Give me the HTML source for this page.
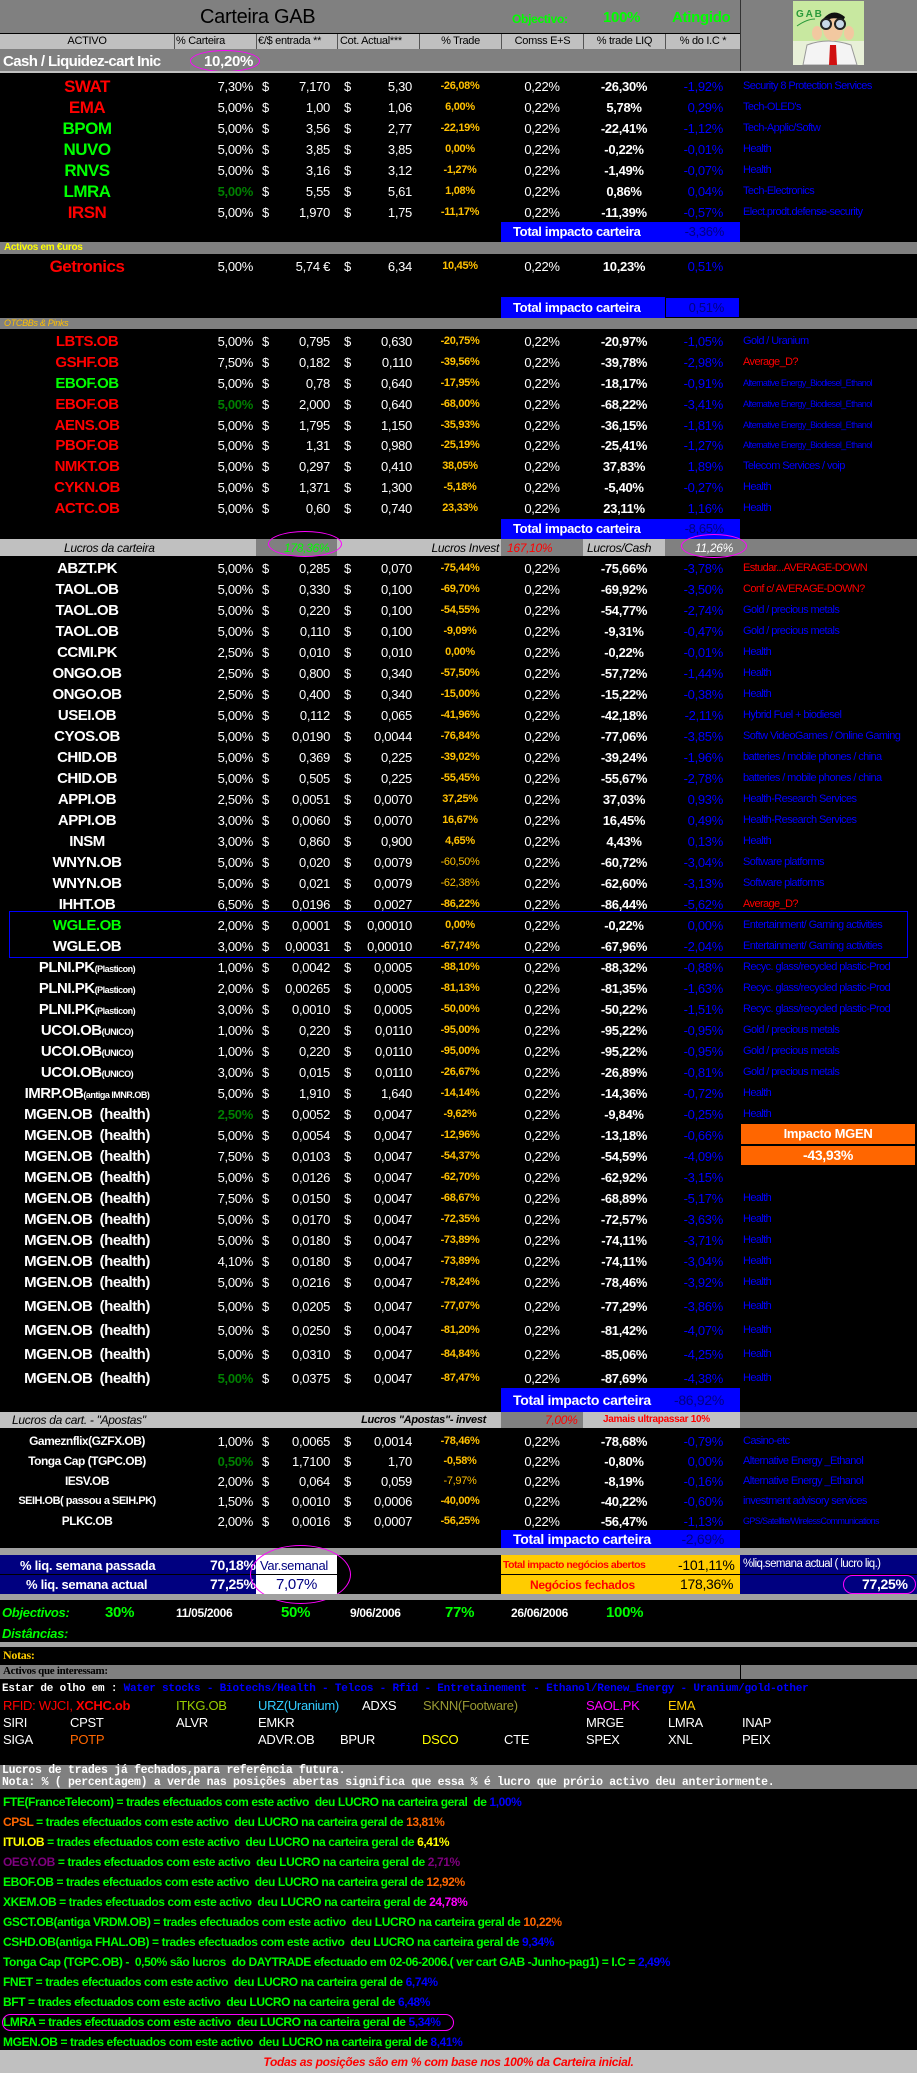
<!DOCTYPE html>
<html><head><meta charset="utf-8">
<style>
*{margin:0;padding:0;box-sizing:border-box}
body{width:917px;height:2073px;background:#000;position:relative;overflow:hidden;font-family:"Liberation Sans Narrow","Liberation Sans",sans-serif;color:#fff;font-size:13px;letter-spacing:-0.3px}
.a{position:absolute;white-space:nowrap}
.r{position:absolute;left:0;width:917px;height:21px;line-height:21px;white-space:nowrap;overflow:hidden}
.r>*{position:absolute;top:0;font-style:normal}
.n{left:0;width:174px;text-align:center;font-weight:bold;font-size:15px;letter-spacing:-0.5px}
.nb{font-size:17px}
.p{right:664px}
.d1{left:262px}.e{right:587px}.d2{left:344px}.c{right:505px}
.t{left:420px;width:80px;text-align:center;color:#ffc000;font-weight:bold;font-size:11px}
.m{left:501px;width:82px;text-align:center}
.l{left:583px;width:82px;text-align:center;font-weight:bold}
.ic{right:194px;color:#0000ff}
.s{left:743px;color:#0000ff;font-size:11px;letter-spacing:-0.6px}
.rd{color:#f00}.gr{color:#00ff00}.dg{color:#008000;font-weight:bold}
.tot{position:absolute;left:501px;width:239px;background:#0000ff;color:#fff;font-weight:bold;font-size:13px;padding-left:12px;white-space:nowrap}
.tot span{position:absolute;right:16px;color:#000080;font-weight:normal}
.ell{position:absolute;border:1px solid #ff00ff;border-radius:50%}
.sm{font-size:9px}
.mono{font-family:"Liberation Mono",monospace;font-weight:bold;font-size:11px;letter-spacing:-0.2px}
.tl{position:absolute;left:3px;font-weight:bold;font-size:12px;color:#00ff00;white-space:nowrap;letter-spacing:-0.4px}
.li{position:absolute;font-size:13px;white-space:nowrap}
</style></head><body>

<div class="a" style="left:0;top:0;width:917px;height:71px;background:#808080"></div>
<div class="a" style="left:200px;top:6px;font-size:20px;color:#000">Carteira GAB</div>
<div class="a" style="left:512px;top:12px;font-size:12px;color:#00ff00;font-weight:bold">Objectivo:</div>
<div class="a" style="left:603px;top:9px;font-size:15px;color:#00ff00;font-weight:bold">100%</div>
<div class="a" style="left:672px;top:9px;font-size:15px;color:#00ff00;font-weight:bold">Atingido</div>
<div class="a" style="left:0;top:33px;width:740px;height:16px;background:#c0c0c0;border-top:1px solid #000"></div>
<div class="a" style="top:34px;left:0;width:740px;height:15px;font-size:11px;color:#000;line-height:15px">
<span class="a" style="left:0;width:174px;text-align:center">ACTIVO</span>
<span class="a" style="left:174px;width:82px;border-left:1px solid #555;padding-left:1px">% Carteira</span>
<span class="a" style="left:256px;width:81px;border-left:1px solid #555;padding-left:1px">€/$ entrada **</span>
<span class="a" style="left:337px;width:82px;border-left:1px solid #555;padding-left:2px">Cot. Actual***</span>
<span class="a" style="left:419px;width:82px;border-left:1px solid #555;text-align:center">% Trade</span>
<span class="a" style="left:501px;width:82px;border-left:1px solid #555;text-align:center">Comss E+S</span>
<span class="a" style="left:583px;width:82px;border-left:1px solid #555;text-align:center">% trade LIQ</span>
<span class="a" style="left:665px;width:75px;border-left:1px solid #555;text-align:center">% do I.C *</span>
</div>
<div class="a" style="left:740px;top:0;width:1px;height:72px;background:#333"></div>
<div class="a" style="left:3px;top:53px;font-size:15px;font-weight:bold;color:#fff;letter-spacing:-0.6px">Cash / Liquidez-cart Inic</div>
<div class="a" style="left:204px;top:53px;font-size:15px;font-weight:bold;color:#fff">10,20%</div>
<div class="ell" style="left:190px;top:50px;width:70px;height:22px"></div>
<div class="a" style="left:0;top:71px;width:917px;height:2px;background:#c0c0c0"></div>
<div class="a" style="left:0;top:73px;width:917px;height:1px;background:#000"></div>
<svg class="a" style="left:793px;top:1px" width="71" height="64" viewBox="0 0 71 64">
<rect width="71" height="64" fill="#e8f0d8"/><rect width="71" height="40" fill="#c8e8a0"/>
<text x="3" y="16" font-size="10" fill="#2a9a3a" font-family="Liberation Sans" font-weight="bold">G A B</text>
<path d="M4 25 Q14 18 22 18" stroke="#2a9a3a" fill="none"/>
<path d="M10 64 L14 44 Q35 36 58 44 L64 64Z" fill="#f4f4f4" stroke="#999"/>
<ellipse cx="40" cy="28" rx="10" ry="12" fill="#f2c8a0"/>
<path d="M30 18 Q40 6 52 16 L50 20 Q40 14 31 21Z" fill="#111"/>
<circle cx="33" cy="23" r="5" fill="#c8d8e8" stroke="#222" stroke-width="2"/>
<circle cx="47" cy="23" r="5" fill="#c8d8e8" stroke="#222" stroke-width="2"/>
<path d="M37 44 L43 44 L44 64 L36 64Z" fill="#d01010"/>
<ellipse cx="24" cy="32" rx="5" ry="7" fill="#f2c8a0"/><ellipse cx="56" cy="32" rx="5" ry="7" fill="#f2c8a0"/>
</svg>

<div class="r" style="top:76px"><b class="n nb rd">SWAT</b><i class="p">7,30%</i><i class="d1">$</i><i class="e">7,170</i><i class="d2">$</i><i class="c">5,30</i><i class="t">-26,08%</i><i class="m">0,22%</i><i class="l">-26,30%</i><i class="ic">-1,92%</i><i class="s">Security 8 Protection Services</i></div>
<div class="r" style="top:97px"><b class="n nb rd">EMA</b><i class="p">5,00%</i><i class="d1">$</i><i class="e">1,00</i><i class="d2">$</i><i class="c">1,06</i><i class="t">6,00%</i><i class="m">0,22%</i><i class="l">5,78%</i><i class="ic">0,29%</i><i class="s">Tech-OLED's</i></div>
<div class="r" style="top:118px"><b class="n nb gr">BPOM</b><i class="p">5,00%</i><i class="d1">$</i><i class="e">3,56</i><i class="d2">$</i><i class="c">2,77</i><i class="t">-22,19%</i><i class="m">0,22%</i><i class="l">-22,41%</i><i class="ic">-1,12%</i><i class="s">Tech-Applic/Softw</i></div>
<div class="r" style="top:139px"><b class="n nb gr">NUVO</b><i class="p">5,00%</i><i class="d1">$</i><i class="e">3,85</i><i class="d2">$</i><i class="c">3,85</i><i class="t">0,00%</i><i class="m">0,22%</i><i class="l">-0,22%</i><i class="ic">-0,01%</i><i class="s">Health</i></div>
<div class="r" style="top:160px"><b class="n nb gr">RNVS</b><i class="p">5,00%</i><i class="d1">$</i><i class="e">3,16</i><i class="d2">$</i><i class="c">3,12</i><i class="t">-1,27%</i><i class="m">0,22%</i><i class="l">-1,49%</i><i class="ic">-0,07%</i><i class="s">Health</i></div>
<div class="r" style="top:181px"><b class="n nb gr">LMRA</b><i class="p dg">5,00%</i><i class="d1">$</i><i class="e">5,55</i><i class="d2">$</i><i class="c">5,61</i><i class="t">1,08%</i><i class="m">0,22%</i><i class="l">0,86%</i><i class="ic">0,04%</i><i class="s">Tech-Electronics</i></div>
<div class="r" style="top:202px"><b class="n nb rd">IRSN</b><i class="p">5,00%</i><i class="d1">$</i><i class="e">1,970</i><i class="d2">$</i><i class="c">1,75</i><i class="t">-11,17%</i><i class="m">0,22%</i><i class="l">-11,39%</i><i class="ic">-0,57%</i><i class="s">Elect.prodt.defense-security</i></div>
<div class="tot" style="top:222px;height:20px;line-height:20px">Total impacto carteira<span>-3,36%</span></div>

<div class="a" style="left:0;top:242px;width:917px;height:12px;background:#808080"></div>
<div class="a" style="left:4px;top:242px;font-size:10px;font-weight:bold;color:#ffff00">Activos em €uros</div>
<div class="r" style="top:256px"><b class="n nb rd">Getronics</b><i class="p">5,00%</i><i class="e">5,74 €</i><i class="d2">$</i><i class="c">6,34</i><i class="t">10,45%</i><i class="m">0,22%</i><i class="l">10,23%</i><i class="ic">0,51%</i></div>
<div class="tot" style="top:297px;height:21px;line-height:21px">Total impacto carteira<span>0,51%</span></div>
<div class="a" style="left:665px;top:297px;width:75px;height:21px;border:1px solid #000"></div>
<div class="a" style="left:0;top:318px;width:917px;height:11px;background:#808080"></div>
<div class="a" style="left:4px;top:318px;font-size:9px;font-style:italic;color:#ffc000">OTCBBs &amp; Pinks</div>

<div class="r" style="top:331px"><b class="n rd">LBTS.OB</b><i class="p">5,00%</i><i class="d1">$</i><i class="e">0,795</i><i class="d2">$</i><i class="c">0,630</i><i class="t">-20,75%</i><i class="m">0,22%</i><i class="l">-20,97%</i><i class="ic">-1,05%</i><i class="s">Gold / Uranium</i></div>
<div class="r" style="top:352px"><b class="n rd">GSHF.OB</b><i class="p">7,50%</i><i class="d1">$</i><i class="e">0,182</i><i class="d2">$</i><i class="c">0,110</i><i class="t">-39,56%</i><i class="m">0,22%</i><i class="l">-39,78%</i><i class="ic">-2,98%</i><i class="s rd">Average_D?</i></div>
<div class="r" style="top:373px"><b class="n gr">EBOF.OB</b><i class="p">5,00%</i><i class="d1">$</i><i class="e">0,78</i><i class="d2">$</i><i class="c">0,640</i><i class="t">-17,95%</i><i class="m">0,22%</i><i class="l">-18,17%</i><i class="ic">-0,91%</i><i class="s sm">Alternative Energy_Biodiesel_Ethanol</i></div>
<div class="r" style="top:394px"><b class="n rd">EBOF.OB</b><i class="p dg">5,00%</i><i class="d1">$</i><i class="e">2,000</i><i class="d2">$</i><i class="c">0,640</i><i class="t">-68,00%</i><i class="m">0,22%</i><i class="l">-68,22%</i><i class="ic">-3,41%</i><i class="s sm">Alternative Energy_Biodiesel_Ethanol</i></div>
<div class="r" style="top:415px"><b class="n rd">AENS.OB</b><i class="p">5,00%</i><i class="d1">$</i><i class="e">1,795</i><i class="d2">$</i><i class="c">1,150</i><i class="t">-35,93%</i><i class="m">0,22%</i><i class="l">-36,15%</i><i class="ic">-1,81%</i><i class="s sm">Alternative Energy_Biodiesel_Ethanol</i></div>
<div class="r" style="top:435px"><b class="n rd">PBOF.OB</b><i class="p">5,00%</i><i class="d1">$</i><i class="e">1,31</i><i class="d2">$</i><i class="c">0,980</i><i class="t">-25,19%</i><i class="m">0,22%</i><i class="l">-25,41%</i><i class="ic">-1,27%</i><i class="s sm">Alternative Energy_Biodiesel_Ethanol</i></div>
<div class="r" style="top:456px"><b class="n rd">NMKT.OB</b><i class="p">5,00%</i><i class="d1">$</i><i class="e">0,297</i><i class="d2">$</i><i class="c">0,410</i><i class="t">38,05%</i><i class="m">0,22%</i><i class="l">37,83%</i><i class="ic">1,89%</i><i class="s">Telecom Services / voip</i></div>
<div class="r" style="top:477px"><b class="n rd">CYKN.OB</b><i class="p">5,00%</i><i class="d1">$</i><i class="e">1,371</i><i class="d2">$</i><i class="c">1,300</i><i class="t">-5,18%</i><i class="m">0,22%</i><i class="l">-5,40%</i><i class="ic">-0,27%</i><i class="s">Health</i></div>
<div class="r" style="top:498px"><b class="n rd">ACTC.OB</b><i class="p">5,00%</i><i class="d1">$</i><i class="e">0,60</i><i class="d2">$</i><i class="c">0,740</i><i class="t">23,33%</i><i class="m">0,22%</i><i class="l">23,11%</i><i class="ic">1,16%</i><i class="s">Health</i></div>
<div class="tot" style="top:519px;height:20px;line-height:20px">Total impacto carteira<span>-8,65%</span></div>

<div class="a" style="left:0;top:539px;width:917px;height:17px;background:#c0c0c0"></div>
<div class="a" style="left:256px;top:539px;width:81px;height:17px;background:#808080"></div>
<div class="a" style="left:501px;top:539px;width:82px;height:17px;background:#808080"></div>
<div class="a" style="left:665px;top:539px;width:252px;height:17px;background:#808080"></div>
<div class="a" style="left:64px;top:541px;font-size:12px;font-style:italic;color:#000">Lucros da carteira</div>
<div class="a" style="left:284px;top:541px;font-size:12px;font-style:italic;color:#00ff00">178,36%</div>
<div class="ell" style="left:268px;top:531px;width:74px;height:26px"></div>
<div class="a" style="left:400px;width:99px;text-align:right;top:541px;font-size:12px;font-style:italic;color:#000">Lucros Invest</div>
<div class="a" style="left:507px;top:541px;font-size:12px;font-style:italic;color:#f00">167,10%</div>
<div class="a" style="left:587px;top:541px;font-size:12px;font-style:italic;color:#000">Lucros/Cash</div>
<div class="a" style="left:695px;top:541px;font-size:12px;font-style:italic;color:#fff">11,26%</div>
<div class="ell" style="left:681px;top:534px;width:66px;height:24px"></div>

<div class="r" style="top:558px"><b class="n">ABZT.PK</b><i class="p">5,00%</i><i class="d1">$</i><i class="e">0,285</i><i class="d2">$</i><i class="c">0,070</i><i class="t">-75,44%</i><i class="m">0,22%</i><i class="l">-75,66%</i><i class="ic">-3,78%</i><i class="s rd">Estudar...AVERAGE-DOWN</i></div>
<div class="r" style="top:579px"><b class="n">TAOL.OB</b><i class="p">5,00%</i><i class="d1">$</i><i class="e">0,330</i><i class="d2">$</i><i class="c">0,100</i><i class="t">-69,70%</i><i class="m">0,22%</i><i class="l">-69,92%</i><i class="ic">-3,50%</i><i class="s rd">Conf c/  AVERAGE-DOWN?</i></div>
<div class="r" style="top:600px"><b class="n">TAOL.OB</b><i class="p">5,00%</i><i class="d1">$</i><i class="e">0,220</i><i class="d2">$</i><i class="c">0,100</i><i class="t">-54,55%</i><i class="m">0,22%</i><i class="l">-54,77%</i><i class="ic">-2,74%</i><i class="s">Gold / precious metals</i></div>
<div class="r" style="top:621px"><b class="n">TAOL.OB</b><i class="p">5,00%</i><i class="d1">$</i><i class="e">0,110</i><i class="d2">$</i><i class="c">0,100</i><i class="t">-9,09%</i><i class="m">0,22%</i><i class="l">-9,31%</i><i class="ic">-0,47%</i><i class="s">Gold / precious metals</i></div>
<div class="r" style="top:642px"><b class="n">CCMI.PK</b><i class="p">2,50%</i><i class="d1">$</i><i class="e">0,010</i><i class="d2">$</i><i class="c">0,010</i><i class="t">0,00%</i><i class="m">0,22%</i><i class="l">-0,22%</i><i class="ic">-0,01%</i><i class="s">Health</i></div>
<div class="r" style="top:663px"><b class="n">ONGO.OB</b><i class="p">2,50%</i><i class="d1">$</i><i class="e">0,800</i><i class="d2">$</i><i class="c">0,340</i><i class="t">-57,50%</i><i class="m">0,22%</i><i class="l">-57,72%</i><i class="ic">-1,44%</i><i class="s">Health</i></div>
<div class="r" style="top:684px"><b class="n">ONGO.OB</b><i class="p">2,50%</i><i class="d1">$</i><i class="e">0,400</i><i class="d2">$</i><i class="c">0,340</i><i class="t">-15,00%</i><i class="m">0,22%</i><i class="l">-15,22%</i><i class="ic">-0,38%</i><i class="s">Health</i></div>
<div class="r" style="top:705px"><b class="n">USEI.OB</b><i class="p">5,00%</i><i class="d1">$</i><i class="e">0,112</i><i class="d2">$</i><i class="c">0,065</i><i class="t">-41,96%</i><i class="m">0,22%</i><i class="l">-42,18%</i><i class="ic">-2,11%</i><i class="s">Hybrid Fuel + biodiesel</i></div>
<div class="r" style="top:726px"><b class="n">CYOS.OB</b><i class="p">5,00%</i><i class="d1">$</i><i class="e">0,0190</i><i class="d2">$</i><i class="c">0,0044</i><i class="t">-76,84%</i><i class="m">0,22%</i><i class="l">-77,06%</i><i class="ic">-3,85%</i><i class="s">Softw VideoGames / Online Gaming</i></div>
<div class="r" style="top:747px"><b class="n">CHID.OB</b><i class="p">5,00%</i><i class="d1">$</i><i class="e">0,369</i><i class="d2">$</i><i class="c">0,225</i><i class="t">-39,02%</i><i class="m">0,22%</i><i class="l">-39,24%</i><i class="ic">-1,96%</i><i class="s">batteries / mobile phones / china</i></div>
<div class="r" style="top:768px"><b class="n">CHID.OB</b><i class="p">5,00%</i><i class="d1">$</i><i class="e">0,505</i><i class="d2">$</i><i class="c">0,225</i><i class="t">-55,45%</i><i class="m">0,22%</i><i class="l">-55,67%</i><i class="ic">-2,78%</i><i class="s">batteries / mobile phones / china</i></div>
<div class="r" style="top:789px"><b class="n">APPI.OB</b><i class="p">2,50%</i><i class="d1">$</i><i class="e">0,0051</i><i class="d2">$</i><i class="c">0,0070</i><i class="t">37,25%</i><i class="m">0,22%</i><i class="l">37,03%</i><i class="ic">0,93%</i><i class="s">Health-Research Services</i></div>
<div class="r" style="top:810px"><b class="n">APPI.OB</b><i class="p">3,00%</i><i class="d1">$</i><i class="e">0,0060</i><i class="d2">$</i><i class="c">0,0070</i><i class="t">16,67%</i><i class="m">0,22%</i><i class="l">16,45%</i><i class="ic">0,49%</i><i class="s">Health-Research Services</i></div>
<div class="r" style="top:831px"><b class="n">INSM</b><i class="p">3,00%</i><i class="d1">$</i><i class="e">0,860</i><i class="d2">$</i><i class="c">0,900</i><i class="t">4,65%</i><i class="m">0,22%</i><i class="l">4,43%</i><i class="ic">0,13%</i><i class="s">Health</i></div>
<div class="r" style="top:852px"><b class="n">WNYN.OB</b><i class="p">5,00%</i><i class="d1">$</i><i class="e">0,020</i><i class="d2">$</i><i class="c">0,0079</i><i class="t" style="font-weight:normal">-60,50%</i><i class="m">0,22%</i><i class="l">-60,72%</i><i class="ic">-3,04%</i><i class="s">Software platforms</i></div>
<div class="r" style="top:873px"><b class="n">WNYN.OB</b><i class="p">5,00%</i><i class="d1">$</i><i class="e">0,021</i><i class="d2">$</i><i class="c">0,0079</i><i class="t" style="font-weight:normal">-62,38%</i><i class="m">0,22%</i><i class="l">-62,60%</i><i class="ic">-3,13%</i><i class="s">Software platforms</i></div>
<div class="r" style="top:894px"><b class="n">IHHT.OB</b><i class="p">6,50%</i><i class="d1">$</i><i class="e">0,0196</i><i class="d2">$</i><i class="c">0,0027</i><i class="t">-86,22%</i><i class="m">0,22%</i><i class="l">-86,44%</i><i class="ic">-5,62%</i><i class="s rd">Average_D?</i></div>
<div class="r" style="top:915px"><b class="n gr">WGLE.OB</b><i class="p">2,00%</i><i class="d1">$</i><i class="e">0,0001</i><i class="d2">$</i><i class="c">0,00010</i><i class="t">0,00%</i><i class="m">0,22%</i><i class="l">-0,22%</i><i class="ic">0,00%</i><i class="s">Entertainment/ Gaming activities</i></div>
<div class="r" style="top:936px"><b class="n">WGLE.OB</b><i class="p">3,00%</i><i class="d1">$</i><i class="e">0,00031</i><i class="d2">$</i><i class="c">0,00010</i><i class="t">-67,74%</i><i class="m">0,22%</i><i class="l">-67,96%</i><i class="ic">-2,04%</i><i class="s">Entertainment/ Gaming activities</i></div>
<div class="a" style="left:9px;top:911px;width:899px;height:47px;border:1px solid #0000ff"></div>
<div class="r" style="top:957px"><b class="n">PLNI.PK<span class="sm">(Plasticon)</span></b><i class="p">1,00%</i><i class="d1">$</i><i class="e">0,0042</i><i class="d2">$</i><i class="c">0,0005</i><i class="t">-88,10%</i><i class="m">0,22%</i><i class="l">-88,32%</i><i class="ic">-0,88%</i><i class="s">Recyc. glass/recycled plastic-Prod</i></div>
<div class="r" style="top:978px"><b class="n">PLNI.PK<span class="sm">(Plasticon)</span></b><i class="p">2,00%</i><i class="d1">$</i><i class="e">0,00265</i><i class="d2">$</i><i class="c">0,0005</i><i class="t">-81,13%</i><i class="m">0,22%</i><i class="l">-81,35%</i><i class="ic">-1,63%</i><i class="s">Recyc. glass/recycled plastic-Prod</i></div>
<div class="r" style="top:999px"><b class="n">PLNI.PK<span class="sm">(Plasticon)</span></b><i class="p">3,00%</i><i class="d1">$</i><i class="e">0,0010</i><i class="d2">$</i><i class="c">0,0005</i><i class="t">-50,00%</i><i class="m">0,22%</i><i class="l">-50,22%</i><i class="ic">-1,51%</i><i class="s">Recyc. glass/recycled plastic-Prod</i></div>
<div class="r" style="top:1020px"><b class="n">UCOI.OB<span class="sm">(UNICO)</span></b><i class="p">1,00%</i><i class="d1">$</i><i class="e">0,220</i><i class="d2">$</i><i class="c">0,0110</i><i class="t">-95,00%</i><i class="m">0,22%</i><i class="l">-95,22%</i><i class="ic">-0,95%</i><i class="s">Gold / precious metals</i></div>
<div class="r" style="top:1041px"><b class="n">UCOI.OB<span class="sm">(UNICO)</span></b><i class="p">1,00%</i><i class="d1">$</i><i class="e">0,220</i><i class="d2">$</i><i class="c">0,0110</i><i class="t">-95,00%</i><i class="m">0,22%</i><i class="l">-95,22%</i><i class="ic">-0,95%</i><i class="s">Gold / precious metals</i></div>
<div class="r" style="top:1062px"><b class="n">UCOI.OB<span class="sm">(UNICO)</span></b><i class="p">3,00%</i><i class="d1">$</i><i class="e">0,015</i><i class="d2">$</i><i class="c">0,0110</i><i class="t">-26,67%</i><i class="m">0,22%</i><i class="l">-26,89%</i><i class="ic">-0,81%</i><i class="s">Gold / precious metals</i></div>
<div class="r" style="top:1083px"><b class="n">IMRP.OB<span class="sm">(antiga IMNR.OB)</span></b><i class="p">5,00%</i><i class="d1">$</i><i class="e">1,910</i><i class="d2">$</i><i class="c">1,640</i><i class="t">-14,14%</i><i class="m">0,22%</i><i class="l">-14,36%</i><i class="ic">-0,72%</i><i class="s">Health</i></div>
<div class="r" style="top:1104px"><b class="n">MGEN.OB&nbsp; (health)</b><i class="p dg">2,50%</i><i class="d1">$</i><i class="e">0,0052</i><i class="d2">$</i><i class="c">0,0047</i><i class="t">-9,62%</i><i class="m">0,22%</i><i class="l">-9,84%</i><i class="ic">-0,25%</i><i class="s">Health</i></div>
<div class="r" style="top:1125px"><b class="n">MGEN.OB&nbsp; (health)</b><i class="p">5,00%</i><i class="d1">$</i><i class="e">0,0054</i><i class="d2">$</i><i class="c">0,0047</i><i class="t">-12,96%</i><i class="m">0,22%</i><i class="l">-13,18%</i><i class="ic">-0,66%</i></div>
<div class="r" style="top:1146px"><b class="n">MGEN.OB&nbsp; (health)</b><i class="p">7,50%</i><i class="d1">$</i><i class="e">0,0103</i><i class="d2">$</i><i class="c">0,0047</i><i class="t">-54,37%</i><i class="m">0,22%</i><i class="l">-54,59%</i><i class="ic">-4,09%</i></div>
<div class="r" style="top:1167px"><b class="n">MGEN.OB&nbsp; (health)</b><i class="p">5,00%</i><i class="d1">$</i><i class="e">0,0126</i><i class="d2">$</i><i class="c">0,0047</i><i class="t">-62,70%</i><i class="m">0,22%</i><i class="l">-62,92%</i><i class="ic">-3,15%</i></div>
<div class="r" style="top:1188px"><b class="n">MGEN.OB&nbsp; (health)</b><i class="p">7,50%</i><i class="d1">$</i><i class="e">0,0150</i><i class="d2">$</i><i class="c">0,0047</i><i class="t">-68,67%</i><i class="m">0,22%</i><i class="l">-68,89%</i><i class="ic">-5,17%</i><i class="s">Health</i></div>
<div class="r" style="top:1209px"><b class="n">MGEN.OB&nbsp; (health)</b><i class="p">5,00%</i><i class="d1">$</i><i class="e">0,0170</i><i class="d2">$</i><i class="c">0,0047</i><i class="t">-72,35%</i><i class="m">0,22%</i><i class="l">-72,57%</i><i class="ic">-3,63%</i><i class="s">Health</i></div>
<div class="r" style="top:1230px"><b class="n">MGEN.OB&nbsp; (health)</b><i class="p">5,00%</i><i class="d1">$</i><i class="e">0,0180</i><i class="d2">$</i><i class="c">0,0047</i><i class="t">-73,89%</i><i class="m">0,22%</i><i class="l">-74,11%</i><i class="ic">-3,71%</i><i class="s">Health</i></div>
<div class="r" style="top:1251px"><b class="n">MGEN.OB&nbsp; (health)</b><i class="p">4,10%</i><i class="d1">$</i><i class="e">0,0180</i><i class="d2">$</i><i class="c">0,0047</i><i class="t">-73,89%</i><i class="m">0,22%</i><i class="l">-74,11%</i><i class="ic">-3,04%</i><i class="s">Health</i></div>
<div class="r" style="top:1272px"><b class="n">MGEN.OB&nbsp; (health)</b><i class="p">5,00%</i><i class="d1">$</i><i class="e">0,0216</i><i class="d2">$</i><i class="c">0,0047</i><i class="t">-78,24%</i><i class="m">0,22%</i><i class="l">-78,46%</i><i class="ic">-3,92%</i><i class="s">Health</i></div>
<div class="r" style="top:1296px"><b class="n">MGEN.OB&nbsp; (health)</b><i class="p">5,00%</i><i class="d1">$</i><i class="e">0,0205</i><i class="d2">$</i><i class="c">0,0047</i><i class="t">-77,07%</i><i class="m">0,22%</i><i class="l">-77,29%</i><i class="ic">-3,86%</i><i class="s">Health</i></div>
<div class="r" style="top:1320px"><b class="n">MGEN.OB&nbsp; (health)</b><i class="p">5,00%</i><i class="d1">$</i><i class="e">0,0250</i><i class="d2">$</i><i class="c">0,0047</i><i class="t">-81,20%</i><i class="m">0,22%</i><i class="l">-81,42%</i><i class="ic">-4,07%</i><i class="s">Health</i></div>
<div class="r" style="top:1344px"><b class="n">MGEN.OB&nbsp; (health)</b><i class="p">5,00%</i><i class="d1">$</i><i class="e">0,0310</i><i class="d2">$</i><i class="c">0,0047</i><i class="t">-84,84%</i><i class="m">0,22%</i><i class="l">-85,06%</i><i class="ic">-4,25%</i><i class="s">Health</i></div>
<div class="r" style="top:1368px"><b class="n">MGEN.OB&nbsp; (health)</b><i class="p dg">5,00%</i><i class="d1">$</i><i class="e">0,0375</i><i class="d2">$</i><i class="c">0,0047</i><i class="t">-87,47%</i><i class="m">0,22%</i><i class="l">-87,69%</i><i class="ic">-4,38%</i><i class="s">Health</i></div>
<div class="a" style="left:741px;top:1124px;width:174px;height:20px;background:#ff6600;color:#fff;text-align:center;font-weight:bold;font-size:13px;line-height:20px">Impacto MGEN</div>
<div class="a" style="left:741px;top:1146px;width:174px;height:19px;background:#ff6600;color:#fff;text-align:center;font-weight:bold;font-size:14px;line-height:19px">-43,93%</div>
<div class="tot" style="top:1388px;height:24px;line-height:24px;font-size:14px">Total impacto carteira<span>-86,92%</span></div>

<div class="a" style="left:0;top:1412px;width:917px;height:16px;background:#c0c0c0"></div>
<div class="a" style="left:501px;top:1412px;width:82px;height:16px;background:#808080"></div>
<div class="a" style="left:740px;top:1412px;width:177px;height:16px;background:#808080"></div>
<div class="a" style="left:12px;top:1413px;font-size:12px;font-style:italic;color:#000">Lucros da cart. - "Apostas"</div>
<div class="a" style="left:340px;width:146px;text-align:right;top:1414px;font-size:11px;font-style:italic;font-weight:bold;color:#000">Lucros "Apostas"- invest</div>
<div class="a" style="left:545px;top:1413px;font-size:12px;font-style:italic;color:#f00">7,00%</div>
<div class="a" style="left:603px;top:1414px;font-size:10px;font-weight:bold;color:#f00">Jamais ultrapassar 10%</div>

<div class="r" style="top:1431px"><b class="n" style="font-size:12px">Gameznflix(GZFX.OB)</b><i class="p">1,00%</i><i class="d1">$</i><i class="e">0,0065</i><i class="d2">$</i><i class="c">0,0014</i><i class="t">-78,46%</i><i class="m">0,22%</i><i class="l">-78,68%</i><i class="ic">-0,79%</i><i class="s">Casino-etc</i></div>
<div class="r" style="top:1451px"><b class="n" style="font-size:12px">Tonga Cap (TGPC.OB)</b><i class="p dg">0,50%</i><i class="d1">$</i><i class="e">1,7100</i><i class="d2">$</i><i class="c">1,70</i><i class="t">-0,58%</i><i class="m">0,22%</i><i class="l">-0,80%</i><i class="ic">0,00%</i><i class="s">Alternative Energy _Ethanol</i></div>
<div class="r" style="top:1471px"><b class="n" style="font-size:12px">IESV.OB</b><i class="p">2,00%</i><i class="d1">$</i><i class="e">0,064</i><i class="d2">$</i><i class="c">0,059</i><i class="t" style="font-weight:normal">-7,97%</i><i class="m">0,22%</i><i class="l">-8,19%</i><i class="ic">-0,16%</i><i class="s">Alternative Energy _Ethanol</i></div>
<div class="r" style="top:1491px"><b class="n" style="font-size:11px">SEIH.OB( passou a SEIH.PK)</b><i class="p">1,50%</i><i class="d1">$</i><i class="e">0,0010</i><i class="d2">$</i><i class="c">0,0006</i><i class="t">-40,00%</i><i class="m">0,22%</i><i class="l">-40,22%</i><i class="ic">-0,60%</i><i class="s">investment advisory services</i></div>
<div class="r" style="top:1511px"><b class="n" style="font-size:12px">PLKC.OB</b><i class="p">2,00%</i><i class="d1">$</i><i class="e">0,0016</i><i class="d2">$</i><i class="c">0,0007</i><i class="t">-56,25%</i><i class="m">0,22%</i><i class="l">-56,47%</i><i class="ic">-1,13%</i><i class="s sm">GPS/Satellite/WirelessCommunications</i></div>
<div class="tot" style="top:1530px;height:18px;line-height:18px;font-size:14px">Total impacto carteira<span>-2,69%</span></div>

<div class="a" style="left:0;top:1548px;width:917px;height:7px;background:#a0a0a0"></div>
<div class="a" style="left:0;top:1555px;width:256px;height:39px;background:#000080"></div>
<div class="a" style="left:256px;top:1555px;width:81px;height:39px;background:#fff"></div>
<div class="a" style="left:501px;top:1555px;width:239px;height:39px;background:#ffcc00"></div>
<div class="a" style="left:740px;top:1555px;width:177px;height:39px;background:#000080"></div>
<div class="a" style="left:0;top:1574px;width:917px;height:1px;background:#000"></div>
<div class="a" style="left:20px;top:1558px;font-size:13px;font-weight:bold">% liq. semana passada</div>
<div class="a" style="left:210px;top:1557px;font-size:14px;font-weight:bold">70,18%</div>
<div class="a" style="left:26px;top:1577px;font-size:13px;font-weight:bold">% liq. semana actual</div>
<div class="a" style="left:210px;top:1576px;font-size:14px;font-weight:bold">77,25%</div>
<div class="a" style="left:260px;top:1558px;font-size:13px;color:#000080">Var.semanal</div>
<div class="a" style="left:276px;top:1576px;font-size:15px;color:#000080">7,07%</div>
<div class="ell" style="left:250px;top:1545px;width:101px;height:59px"></div>
<div class="a" style="left:503px;top:1559px;font-size:10.5px;font-weight:bold;color:#f00;letter-spacing:-0.5px">Total impacto negócios abertos</div>
<div class="a" style="left:678px;top:1557px;font-size:14px;color:#000">-101,11%</div>
<div class="a" style="left:530px;top:1578px;font-size:12px;font-weight:bold;color:#f00">Negócios fechados</div>
<div class="a" style="left:680px;top:1576px;font-size:14px;color:#000">178,36%</div>
<div class="a" style="left:743px;top:1558px;font-size:11.5px;letter-spacing:-0.6px">%liq.semana actual ( lucro liq.)</div>
<div class="a" style="left:862px;top:1576px;font-size:14px;font-weight:bold">77,25%</div>
<div class="ell" style="left:843px;top:1575px;width:73px;height:19px;border-radius:10px"></div>
<div class="a" style="left:0;top:1594px;width:917px;height:6px;background:#a0a0a0"></div>

<div class="a" style="left:2px;top:1605px;font-size:13px;font-weight:bold;font-style:italic;color:#00ff00">Objectivos:</div>
<div class="a" style="left:105px;top:1604px;font-size:15px;font-weight:bold;color:#00ff00">30%</div>
<div class="a" style="left:176px;top:1606px;font-size:12px;font-weight:bold">11/05/2006</div>
<div class="a" style="left:281px;top:1604px;font-size:15px;font-weight:bold;color:#00ff00">50%</div>
<div class="a" style="left:350px;top:1606px;font-size:12px;font-weight:bold">9/06/2006</div>
<div class="a" style="left:445px;top:1604px;font-size:15px;font-weight:bold;color:#00ff00">77%</div>
<div class="a" style="left:511px;top:1606px;font-size:12px;font-weight:bold">26/06/2006</div>
<div class="a" style="left:606px;top:1604px;font-size:15px;font-weight:bold;color:#00ff00">100%</div>
<div class="a" style="left:2px;top:1626px;font-size:13px;font-weight:bold;font-style:italic;color:#00ff00">Distâncias:</div>
<div class="a" style="left:0;top:1642px;width:917px;height:5px;background:#a0a0a0"></div>

<div class="a" style="left:3px;top:1648px;font-size:12px;font-weight:bold;color:#ffcc00;font-family:'Liberation Serif',serif">Notas:</div>
<div class="a" style="left:0;top:1665px;width:917px;height:14px;background:#808080"></div>
<div class="a" style="left:740px;top:1665px;width:1px;height:14px;background:#000"></div>
<div class="a" style="left:3px;top:1665px;font-size:11px;font-weight:bold;color:#000;font-family:'Liberation Serif',serif">Activos que interessam:</div>
<div class="a mono" style="left:2px;top:1683px">Estar de olho em : <span style="color:#0000ff">Water stocks - Biotechs/Health - Telcos - Rfid - Entretainement - Ethanol/Renew_Energy - Uranium/gold-other</span></div>

<div class="li" style="left:3px;top:1698px;color:#f00">RFID: WJCI, <b>XCHC.ob</b></div>
<div class="li" style="left:176px;top:1698px;color:#99cc00">ITKG.OB</div>
<div class="li" style="left:258px;top:1698px;color:#33ccff">URZ(Uranium)</div>
<div class="li" style="left:362px;top:1698px">ADXS</div>
<div class="li" style="left:423px;top:1698px;color:#999933">SKNN(Footware)</div>
<div class="li" style="left:586px;top:1698px;color:#ff00ff">SAOL.PK</div>
<div class="li" style="left:668px;top:1698px;color:#ffcc00">EMA</div>
<div class="li" style="left:3px;top:1715px">SIRI</div>
<div class="li" style="left:70px;top:1715px">CPST</div>
<div class="li" style="left:176px;top:1715px">ALVR</div>
<div class="li" style="left:258px;top:1715px">EMKR</div>
<div class="li" style="left:586px;top:1715px">MRGE</div>
<div class="li" style="left:668px;top:1715px">LMRA</div>
<div class="li" style="left:742px;top:1715px">INAP</div>
<div class="li" style="left:3px;top:1732px">SIGA</div>
<div class="li" style="left:70px;top:1732px;color:#ff6600">POTP</div>
<div class="li" style="left:258px;top:1732px">ADVR.OB</div>
<div class="li" style="left:340px;top:1732px">BPUR</div>
<div class="li" style="left:422px;top:1732px;color:#ffff00">DSCO</div>
<div class="li" style="left:504px;top:1732px">CTE</div>
<div class="li" style="left:586px;top:1732px">SPEX</div>
<div class="li" style="left:668px;top:1732px">XNL</div>
<div class="li" style="left:742px;top:1732px">PEIX</div>

<div class="a" style="left:0;top:1765px;width:917px;height:24px;background:#808080"></div>
<div class="a mono" style="left:2px;top:1765px;line-height:12px;font-size:11.5px;letter-spacing:-0.3px">Lucros de trades já fechados,para referência futura.<br>Nota: % ( percentagem) a verde nas posições abertas significa que essa % é lucro que prório activo deu anteriormente.</div>

<div class="tl" style="top:1795px">FTE(FranceTelecom) = trades efectuados com este activo&nbsp; deu LUCRO na carteira geral&nbsp; de <span style="color:#0000ff">1,00%</span></div>
<div class="tl" style="top:1815px"><span style="color:#ff6600">CPSL</span> = trades efectuados com este activo&nbsp; deu LUCRO na carteira geral de <span style="color:#ff6600">13,81%</span></div>
<div class="tl" style="top:1835px"><span style="color:#ffff00">ITUI.OB</span> = trades efectuados com este activo&nbsp; deu LUCRO na carteira geral de <span style="color:#ffff00">6,41%</span></div>
<div class="tl" style="top:1855px"><span style="color:#800080">OEGY.OB</span> = trades efectuados com este activo&nbsp; deu LUCRO na carteira geral de <span style="color:#800080">2,71%</span></div>
<div class="tl" style="top:1875px">EBOF.OB = trades efectuados com este activo&nbsp; deu LUCRO na carteira geral de <span style="color:#ff6600">12,92%</span></div>
<div class="tl" style="top:1895px">XKEM.OB = trades efectuados com este activo&nbsp; deu LUCRO na carteira geral de <span style="color:#ff00ff">24,78%</span></div>
<div class="tl" style="top:1915px">GSCT.OB(antiga VRDM.OB) = trades efectuados com este activo&nbsp; deu LUCRO na carteira geral de <span style="color:#ff6600">10,22%</span></div>
<div class="tl" style="top:1935px">CSHD.OB(antiga FHAL.OB) = trades efectuados com este activo&nbsp; deu LUCRO na carteira geral de <span style="color:#0000ff">9,34%</span></div>
<div class="tl" style="top:1955px">Tonga Cap (TGPC.OB) -&nbsp; 0,50% são lucros&nbsp; do DAYTRADE efectuado em 02-06-2006.( ver cart GAB -Junho-pag1) = I.C = <span style="color:#0000ff">2,49%</span></div>
<div class="tl" style="top:1975px">FNET = trades efectuados com este activo&nbsp; deu LUCRO na carteira geral de <span style="color:#0000ff">6,74%</span></div>
<div class="tl" style="top:1995px">BFT = trades efectuados com este activo&nbsp; deu LUCRO na carteira geral de <span style="color:#0000ff">6,48%</span></div>
<div class="tl" style="top:2015px">LMRA = trades efectuados com este activo&nbsp; deu LUCRO na carteira geral de <span style="color:#0000ff">5,34%</span></div>
<div class="ell" style="left:2px;top:2014px;width:452px;height:17px;border-radius:9px"></div>
<div class="tl" style="top:2035px">MGEN.OB = trades efectuados com este activo&nbsp; deu LUCRO na carteira geral de <span style="color:#0000ff">8,41%</span></div>

<div class="a" style="left:0;top:2050px;width:917px;height:23px;background:#c0c0c0"></div>
<div class="a" style="left:0;top:2055px;width:917px;text-align:center;font-size:12px;font-weight:bold;font-style:italic;color:#f00;padding-right:20px">Todas as posições são em % com base nos 100% da Carteira inicial.</div>
</body></html>
